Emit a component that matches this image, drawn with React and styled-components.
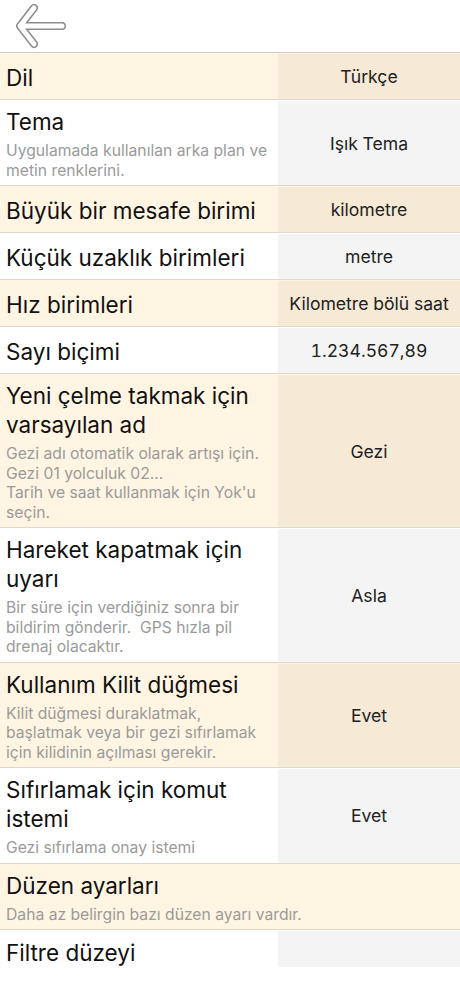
import React from 'react';
import styled, { createGlobalStyle } from 'styled-components';

const GlobalStyle = createGlobalStyle`
    html, body {
        margin: 0;
        padding: 0;
        background: #ffffff;
    }
    body {
        font-family: Inter, "Liberation Sans", "Noto Sans", sans-serif;
        -webkit-font-smoothing: antialiased;
    }
`;

const settings = [
    { title: 'Dil', value: 'Türkçe' },
    { title: 'Tema', desc: ['Uygulamada kullanılan arka plan ve', 'metin renklerini.'], value: 'Işık Tema' },
    { title: 'Büyük bir mesafe birimi', value: 'kilometre' },
    { title: 'Küçük uzaklık birimleri', value: 'metre' },
    { title: 'Hız birimleri', value: 'Kilometre bölü saat' },
    { title: 'Sayı biçimi', value: '1.234.567,89' },
    {
        title: ['Yeni çelme takmak için', 'varsayılan ad'],
        desc: ['Gezi adı otomatik olarak artışı için.', 'Gezi 01 yolculuk 02...', "Tarih ve saat kullanmak için Yok'u", 'seçin.'],
        value: 'Gezi',
    },
    {
        title: ['Hareket kapatmak için', 'uyarı'],
        desc: ['Bir süre için verdiğiniz sonra bir', 'bildirim gönderir.  GPS hızla pil', 'drenaj olacaktır.'],
        value: 'Asla',
    },
    {
        title: 'Kullanım Kilit düğmesi',
        desc: ['Kilit düğmesi duraklatmak,', 'başlatmak veya bir gezi sıfırlamak', 'için kilidinin açılması gerekir.'],
        value: 'Evet',
    },
    {
        title: ['Sıfırlamak için komut', 'istemi'],
        desc: ['Gezi sıfırlama onay istemi'],
        value: 'Evet',
    },
    { title: 'Düzen ayarları', desc: ['Daha az belirgin bazı düzen ayarı vardır.'], wide: true },
    { title: 'Filtre düzeyi', value: '', last: true },
];

const BackArrow = () => (
    <svg width="62" height="52" viewBox="0 0 62 52">
        <g fill="none" strokeLinecap="round" strokeLinejoin="round">
            <g stroke="#8c8c8c" strokeWidth="8">
                <path d="M20 8 L6 26 L20 44" />
                <path d="M8 26 L48 26" />
            </g>
            <g stroke="#ffffff" strokeWidth="5">
                <path d="M20 8 L6 26 L20 44" />
                <path d="M8 26 L48 26" />
            </g>
        </g>
    </svg>
);

const lines = (v) => (Array.isArray(v) ? v : [v]);

const App = () => {
    return (
        <Page>
            <GlobalStyle />
            <Header>
                <BackButton>
                    <BackArrow />
                </BackButton>
            </Header>
            <List>
                {settings.map((s, i) => (
                    <Row key={i} $tone={i % 2 === 0 ? 'cream' : 'white'} $last={s.last}>
                        <Label>
                            {lines(s.title).map((t) => (
                                <Title key={t}>{t}</Title>
                            ))}
                            {s.desc && (
                                <Desc>
                                    {s.desc.map((d) => (
                                        <DescLine key={d}>{d}</DescLine>
                                    ))}
                                </Desc>
                            )}
                        </Label>
                        {!s.wide && <Value $tone={i % 2 === 0 ? 'cream' : 'white'}>{s.value}</Value>}
                    </Row>
                ))}
            </List>
            <Footer />
        </Page>
    );
};

export default App;

const Page = styled.div`
    width: 460px;
    height: 996px;
    display: flex;
    flex-direction: column;
    background: #ffffff;
    overflow: hidden;
`;

const Header = styled.div`
    height: 52px;
    flex: none;
    display: flex;
    align-items: center;
    border-bottom: 1px solid #cfcac3;
`;

const BackButton = styled.div`
    width: 62px;
    height: 52px;
    margin-left: 14px;
    display: flex;
    align-items: center;
`;

const List = styled.div`
    flex: 1;
    min-height: 0;
    display: flex;
    flex-direction: column;
    overflow: hidden;
`;

const Footer = styled.div`
    height: 29px;
    flex: none;
    background: #ffffff;
`;

const Row = styled.div`
    display: flex;
    flex: none;
    min-height: ${({ $last }) => ($last ? '42px' : '46px')};
    background: ${({ $tone }) => ($tone === 'cream' ? '#fff5e2' : '#ffffff')};
    border-bottom: ${({ $last }) => ($last ? 'none' : '1px solid #ddd7cc')};
`;

const Label = styled.div`
    flex: 1;
    display: flex;
    flex-direction: column;
    justify-content: center;
    padding: 7px 6px 5px 6px;
`;

const Title = styled.div`
    font-size: 22.5px;
    line-height: 29px;
    color: #111111;
`;

const Desc = styled.div`
    margin-top: 5px;
`;

const DescLine = styled.div`
    font-size: 15.7px;
    line-height: 19.5px;
    color: #9a9a9a;
    white-space: pre;
`;

const Value = styled.div`
    width: 182px;
    flex: none;
    margin-top: 1px;
    display: flex;
    align-items: center;
    justify-content: center;
    font-size: 17.6px;
    font-variant-numeric: tabular-nums;
    color: #222222;
    background: ${({ $tone }) => ($tone === 'cream' ? '#f6e9d5' : '#f4f4f4')};
`;
